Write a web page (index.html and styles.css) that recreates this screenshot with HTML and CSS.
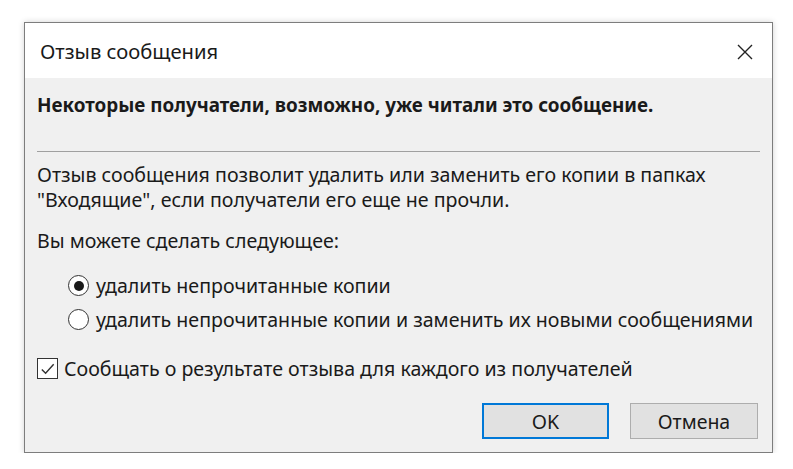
FILE: index.html
```html
<!DOCTYPE html>
<html lang="ru">
<head>
<meta charset="utf-8">
<title>Отзыв сообщения</title>
<link rel="stylesheet" href="styles.css">
</head>
<body>
<div class="page">
  <div class="dialog">
    <div class="titlebar">
      <span class="title">Отзыв сообщения</span>
      <svg class="close" width="16" height="16" viewBox="0 0 16 16"><path d="M1 1L15 15M15 1L1 15" stroke="#222" stroke-width="1.4" fill="none"/></svg>
    </div>
    <div class="content">
      <p class="warn">Некоторые получатели, возможно, уже читали это сообщение.</p>
      <hr class="sep">
      <p class="para">Отзыв сообщения позволит удалить или заменить его копии в папках<br>"Входящие", если получатели его еще не прочли.</p>
      <p class="lead">Вы можете сделать следующее:</p>
      <div class="options">
        <div class="opt"><span class="radio checked"></span><span>удалить непрочитанные копии</span></div>
        <div class="opt"><span class="radio"></span><span>удалить непрочитанные копии и заменить их новыми сообщениями</span></div>
      </div>
      <div class="check-row">
        <span class="checkbox"><svg width="20" height="20" viewBox="0 0 20 20"><path d="M4 10.5L8 14.5L16.5 5" stroke="#333" stroke-width="1.5" fill="none"/></svg></span>
        <span>Сообщать о результате отзыва для каждого из получателей</span>
      </div>
      <div class="buttons">
        <div class="btn default">OK</div>
        <div class="btn">Отмена</div>
      </div>
    </div>
  </div>
</div>
</body>
</html>
```
FILE: styles.css
```css
* { box-sizing: border-box; }
html, body { margin: 0; padding: 0; background: #fff; }
body { font-family: "Noto Sans", "Open Sans", sans-serif; color: #1a1a1a; }
.page { padding: 22px 0 0 24px; }
.dialog {
  width: 749px;
  height: 431px;
  border: 1px solid #7d7d7d;
  background: #f0f0f0;
  box-shadow: 0 0 6px rgba(0,0,0,0.18);
  display: flex;
  flex-direction: column;
}
.titlebar {
  height: 55px;
  background: #fff;
  display: flex;
  align-items: center;
  justify-content: space-between;
  padding: 0 19px 0 15px;
}
.title { font-size: 20.2px; line-height: 25px; margin-top: 2px; }
.close { margin-top: 2px; }
.content {
  flex: 1;
  padding: 15px 14px 12px 12px;
  display: flex;
  flex-direction: column;
  font-size: 19.6px;
  line-height: 25px;
}
p { margin: 0; }
.warn { font-weight: bold; font-size: 18.85px; }
.sep { margin: 33px 0 0 0; border: 0; border-top: 1px solid #a0a0a0; width: 723px; height: 0; }
.para { margin-top: 10px; }
.lead { margin-top: 16px; }
.options { margin-top: 20px; padding-left: 31px; display: flex; flex-direction: column; gap: 9px; }
.opt { display: flex; align-items: center; gap: 7px; }
.radio {
  width: 21px; height: 21px; border: 1.6px solid #333; border-radius: 50%;
  background: #fff; display: flex; align-items: center; justify-content: center;
  flex: none;
}
.radio.checked::after { content: ""; width: 10px; height: 10px; border-radius: 50%; background: #1a1a1a; }
.check-row { margin-top: 24px; display: flex; align-items: center; gap: 6px; }
.checkbox {
  width: 21px; height: 21px; border: 1.6px solid #333; background: #fff; flex: none;
  display: flex; align-items: center; justify-content: center;
}
.buttons { margin-top: 22px; display: flex; justify-content: flex-end; gap: 21px; }
.btn {
  width: 128px; height: 36px; background: #e1e1e1; border: 1px solid #adadad;
  display: flex; align-items: center; justify-content: center; font-size: 19.5px;
}
.btn.default { border: 2px solid #0078d7; width: 127px; }
```
